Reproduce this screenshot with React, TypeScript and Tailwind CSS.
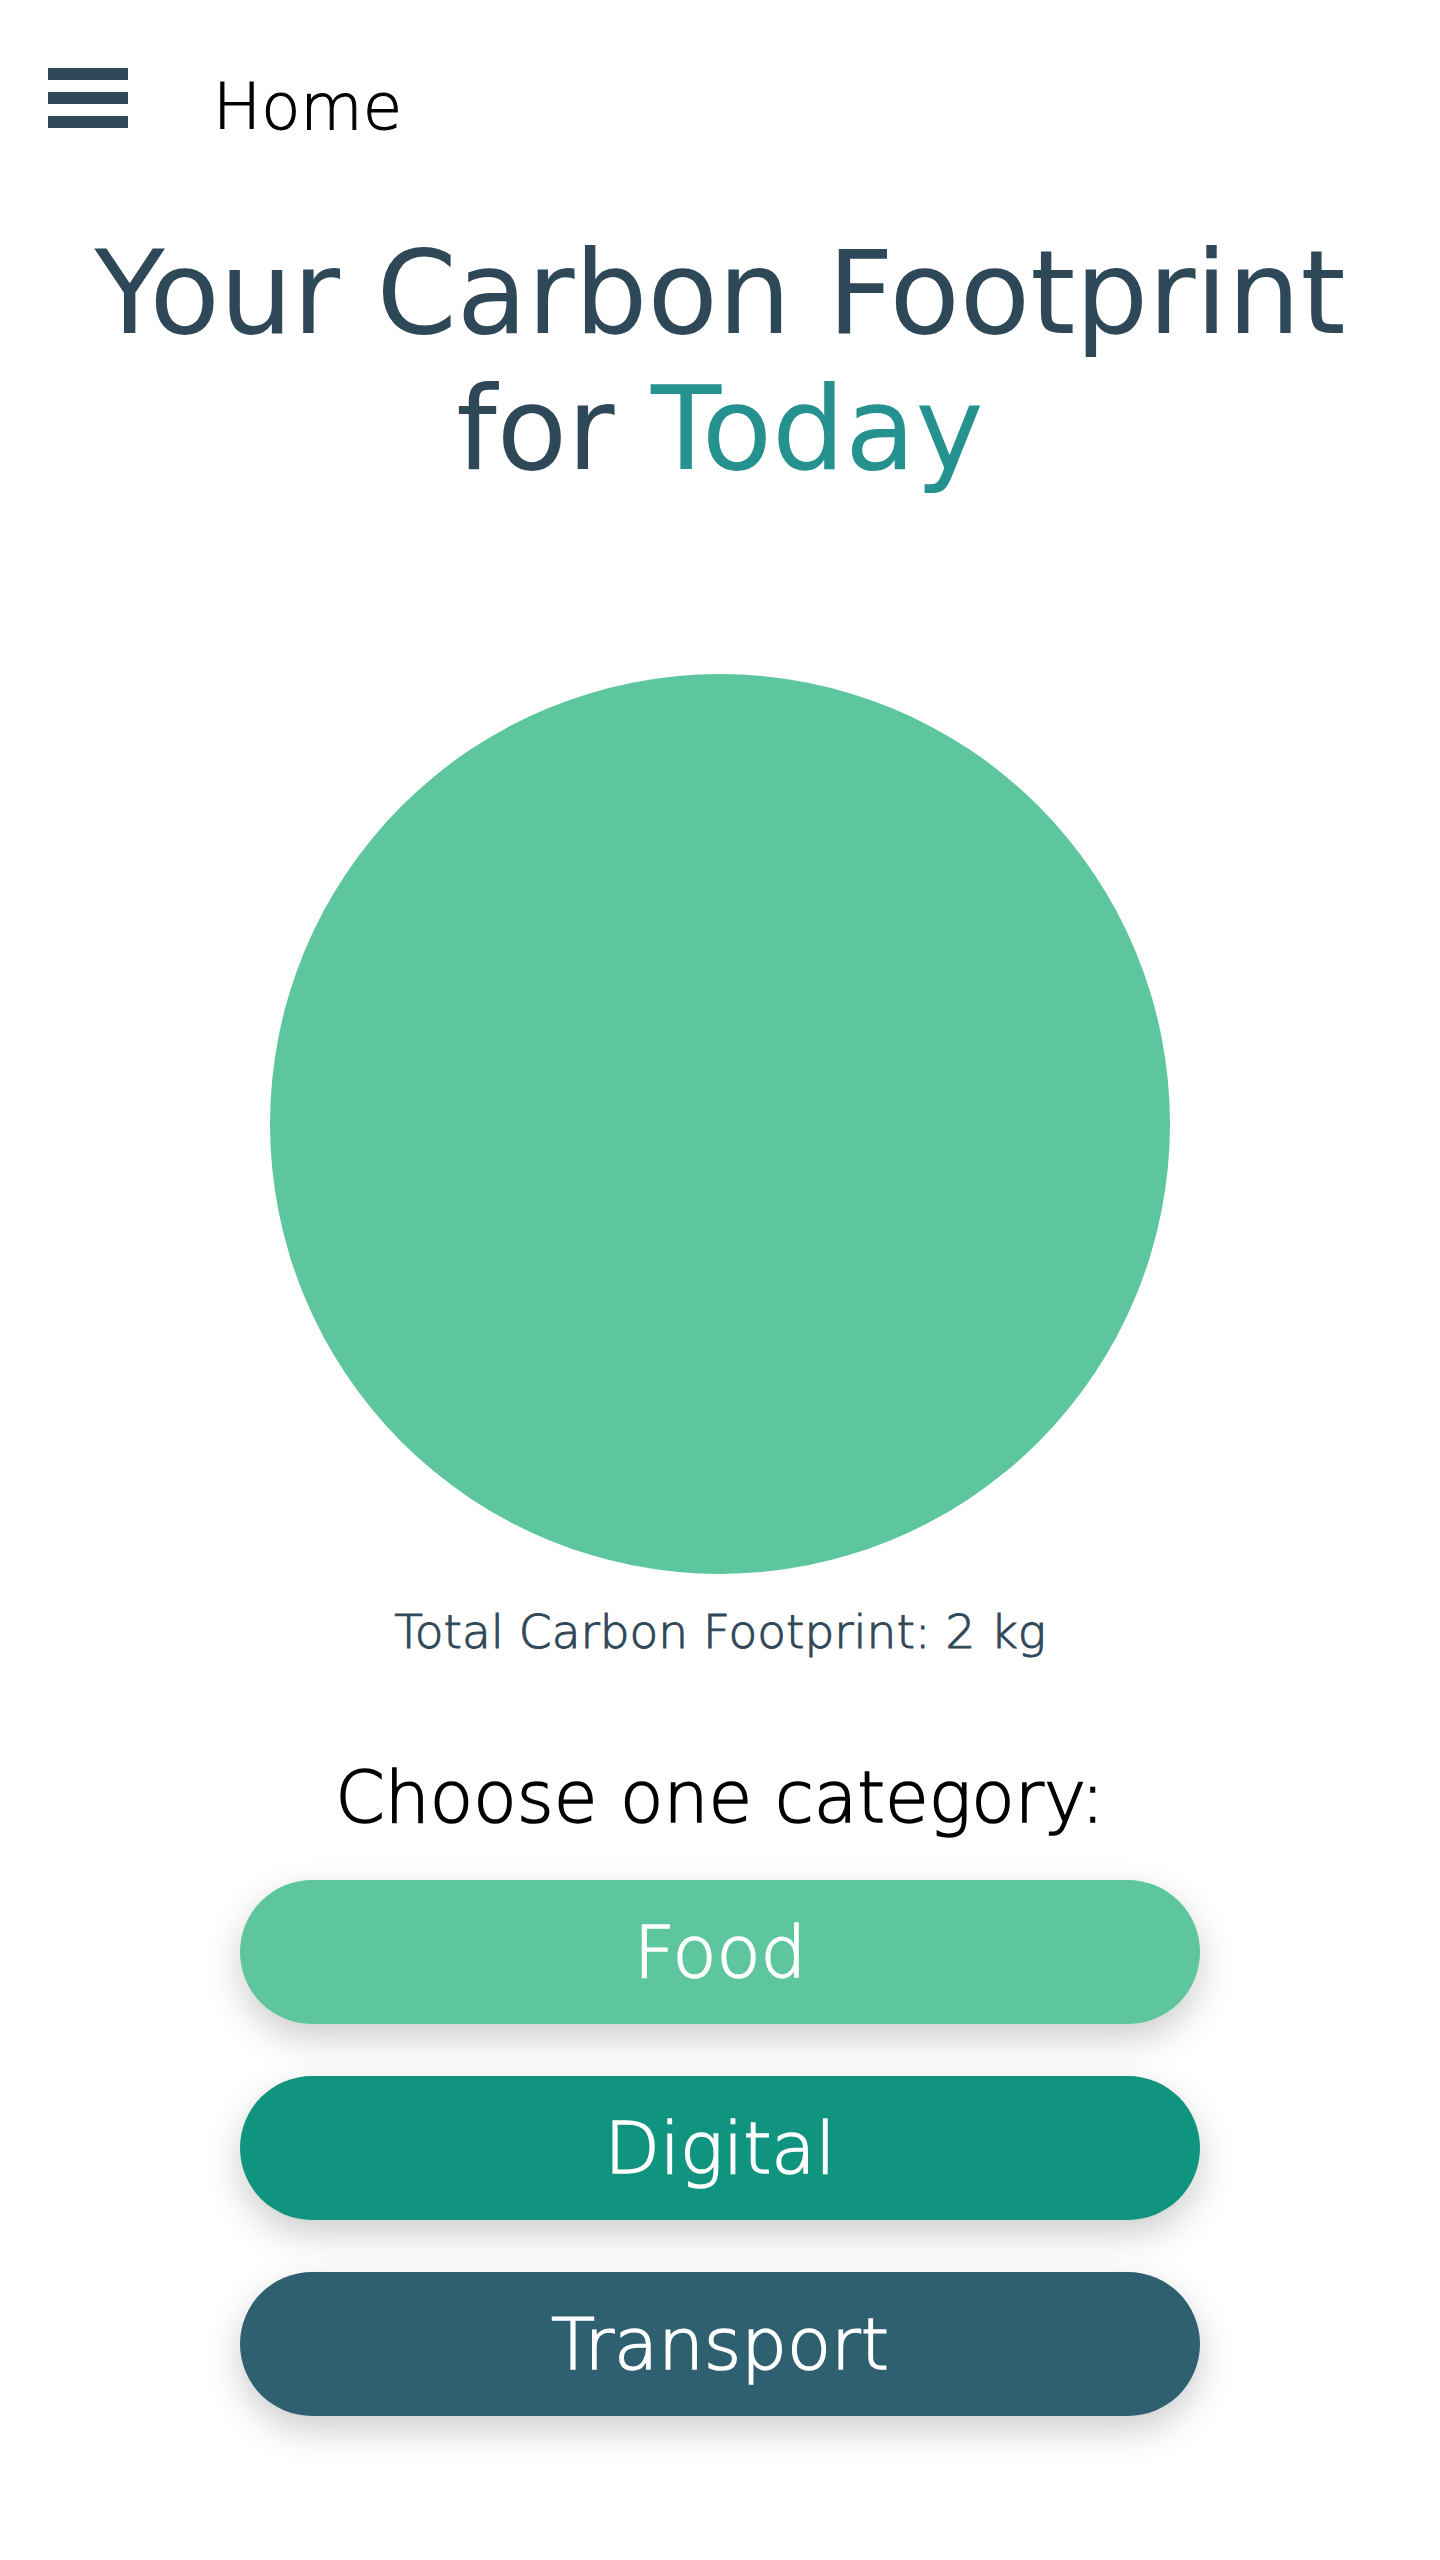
import React from 'react';

const categories = [
  { label: 'Food', className: 'bg-[#5dc69e]' },
  { label: 'Digital', className: 'bg-[#10937f]' },
  { label: 'Transport', className: 'bg-[#2e6070]' },
];

export default function App() {
  return (
    <div className="min-h-[2560px] bg-white font-['DejaVu_Sans',sans-serif]">
      {/* Header */}
      <header className="flex items-start pl-12 pt-[68px]">
        <button className="flex h-[60px] w-20 flex-col justify-between" aria-label="Menu">
          <span className="block h-3 w-20 bg-[#2f4858]"></span>
          <span className="block h-3 w-20 bg-[#2f4858]"></span>
          <span className="block h-3 w-20 bg-[#2f4858]"></span>
        </button>
        <span className="ml-[85px] mt-[7px] text-[64px] font-extralight leading-[64px] text-black [-webkit-text-stroke:1px_currentcolor]">
          Home
        </span>
      </header>

      {/* Title */}
      <h1 className="mt-[86px] text-center text-[115px] font-normal leading-[136px] text-[#2f4858]">
        Your Carbon Footprint
        <br />
        for <span className="text-[#26928f]">Today</span>
      </h1>

      {/* Footprint circle */}
      <div className="mx-auto mt-[177px] h-[900px] w-[900px] rounded-full bg-[#5dc69e]"></div>

      <p className="mt-[30px] text-center text-[47px] font-extralight leading-[56px] text-[#2f4858] [-webkit-text-stroke:1px_currentcolor]">
        Total Carbon Footprint: 2 kg
      </p>

      {/* Categories */}
      <h2 className="mt-[98px] text-center text-[71px] font-extralight leading-[80px] text-black [-webkit-text-stroke:1.5px_currentcolor]">
        Choose one category:
      </h2>

      <div className="mt-[42px] flex flex-col items-center gap-[52px]">
        {categories.map((cat) => (
          <button
            key={cat.label}
            className={`flex h-[144px] w-[960px] items-center justify-center rounded-full text-[72px] font-extralight text-white shadow-[0_14px_36px_rgba(0,0,0,0.2)] [-webkit-text-stroke:1.5px_currentcolor] ${cat.className}`}
          >
            {cat.label}
          </button>
        ))}
      </div>
    </div>
  );
}
